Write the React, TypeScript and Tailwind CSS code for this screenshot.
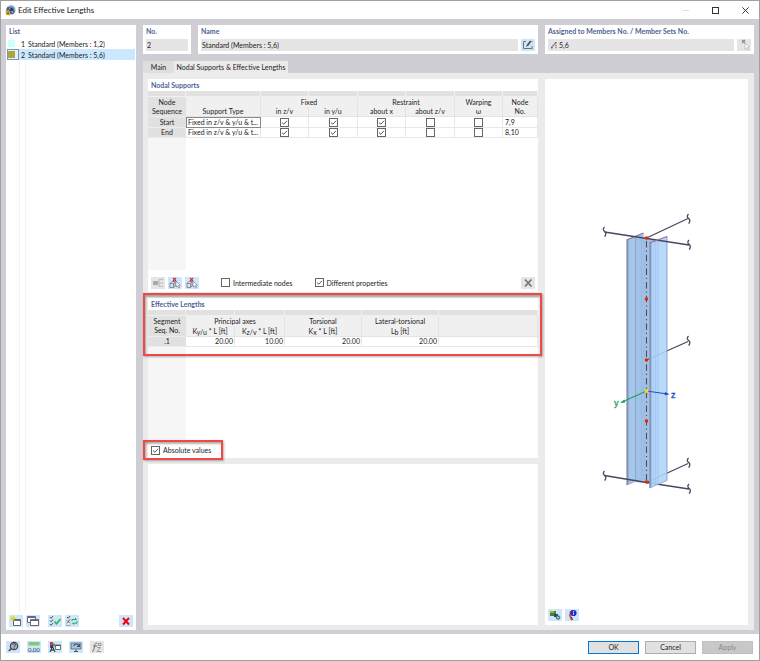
import React, { useState } from "react";

type CheckProps = { label: string; checked?: boolean; showLabel?: boolean };

function Check({ label, checked = false, showLabel = false }: CheckProps) {
  const [on, setOn] = useState(checked);
  return (
    <label className="inline-flex items-center gap-[3px] align-top">
      <span className="grid size-[9px] shrink-0">
        <input
          type="checkbox"
          aria-label={label}
          checked={on}
          onChange={() => setOn(!on)}
          className="col-start-1 row-start-1 size-[9px] appearance-none border border-[#666] bg-white"
        />
        {on && (
          <svg viewBox="0 0 9 9" className="pointer-events-none col-start-1 row-start-1 size-[9px]" aria-hidden="true">
            <path d="M2 4.6 L3.8 6.2 L7 2.8" fill="none" stroke="#444" strokeWidth="0.9" />
          </svg>
        )}
      </span>
      {showLabel && <span>{label}</span>}
    </label>
  );
}

type ToolProps = { label: string; off?: boolean; children: React.ReactNode };

function Tool({ label, off = false, children }: ToolProps) {
  return (
    <button
      type="button"
      aria-label={label}
      disabled={off}
      className={
        off
          ? "flex h-3 w-[14px] shrink-0 items-center justify-center bg-[#e5e5e5]"
          : "flex h-3 w-[14px] shrink-0 items-center justify-center bg-[#cde6f9]"
      }
    >
      <svg viewBox="0 0 14 12" className="h-3 w-[14px]" fill="none" aria-hidden="true">
        {children}
      </svg>
    </button>
  );
}

function Heading({ children }: { children: React.ReactNode }) {
  return <h2 className="h-3 px-[3px] leading-3 font-bold text-[#4d5f92]">{children}</h2>;
}

function PickIcon({ muted = false }: { muted?: boolean }) {
  const line = muted ? "#aaa" : "#667";
  return (
    <>
      {!muted && (
        <path d="M2 6.5 L4 4.5 H7 V9 L5.5 10.5 H2 Z M2 6.5 H5.5 V10.5 M5.5 6.5 L7 5" stroke="#667" strokeWidth="0.7" fill="#dce6ee" />
      )}
      <path d="M5 1 L8 4 M8 1 L5 4" stroke={muted ? "#888" : "#e0202c"} strokeWidth="1.1" />
      <path d="M8 4 V10 L9.4 8.8 L10.6 11 L11.6 10.4 L10.6 8.4 L12.2 8.2 Z" fill="#fff" stroke={line} strokeWidth="0.6" />
    </>
  );
}

function Breaker({ x, y }: { x: number; y: number }) {
  return (
    <path
      d={`M${x} ${y - 5} q-2.4 2.4 0 4.4 q2.6 1.6 0.2 5.2`}
      fill="none"
      stroke="#4b4660"
      strokeWidth="1.3"
    />
  );
}

function MemberView() {
  return (
    <svg viewBox="545 79 203 529" className="min-h-0 w-full flex-1" role="img" aria-label="Member preview">
      <polygon points="626.5,240 643.5,233 643.5,478 626.5,485" fill="#a6c6ea" />
      <polygon points="635.5,237.5 658,240.5 658,484 635.5,482" fill="#a1c1e6" />
      <path d="M635.5 237V481" stroke="#829fc6" strokeWidth="0.8" />
      <path d="M641.5 235V480 M644 233V480" stroke="#8facd2" strokeWidth="0.4" />
      <path d="M627.5 240V485" stroke="#8792b4" strokeWidth="2" />
      <path d="M626.5 240 L643.5 233" stroke="#966f8c" strokeWidth="1.2" />
      <path d="M646.5 360 L688 341.5" stroke="#4b4660" strokeWidth="1.3" />
      <path d="M646.5 482.5 L688 463.5" stroke="#4b4660" strokeWidth="1.3" />
      <path d="M604.5 475.5 L646.5 482.5 L689 489" stroke="#4b4660" strokeWidth="1.3" fill="none" />
      <polygon points="649.5,243 667,236.5 667,480.5 649.5,488" fill="#afd4fb" fillOpacity="0.88" />
      <path d="M655.5 241V485 M658.5 240V484" stroke="#9cc2ec" strokeWidth="0.5" />
      <path d="M667 236.5V480.5" stroke="#7592bd" strokeWidth="0.8" />
      <path d="M650.3 243V488" stroke="#8792b4" strokeWidth="2" />
      <path d="M626.5 485 L634 482 M649.5 488 L667 480.5" stroke="#8ba3ca" strokeWidth="0.8" />
      <path d="M604.5 232 L689 245" stroke="#4b4660" strokeWidth="1.3" />
      <path d="M646.5 238 L688 218.5" stroke="#4b4660" strokeWidth="1.3" />
      <path d="M649.5 243 L667 236.5" stroke="#966f8c" strokeWidth="1.2" />
      <path d="M646.5 241V482" stroke="#54495a" strokeWidth="1.1" strokeDasharray="6.5 3 1.2 3" />
      <Breaker x={604.5} y={232} />
      <Breaker x={688.5} y={219} />
      <Breaker x={689} y={245} />
      <Breaker x={688.5} y={341} />
      <Breaker x={604.5} y={476} />
      <Breaker x={688.5} y={463} />
      <Breaker x={689} y={489} />
      {[238, 299, 360, 421, 482].map((cy) => (
        <circle key={cy} cx="646.5" cy={cy} r="1.8" fill="#e02a00" />
      ))}
      <path d="M646.5 391 L622 402" stroke="#1fa055" strokeWidth="1.1" />
      <path d="M620 403 L624.2 399.6 L625.4 402.4 Z" fill="#1fa055" />
      <path d="M646.5 391 L666 393.7" stroke="#2456b8" strokeWidth="1.1" />
      <path d="M669.5 394.2 L665 391.9 L664.6 395.3 Z" fill="#1848c8" />
      <circle cx="646.5" cy="391" r="1.9" fill="#ffd800" />
      <g fontFamily="Liberation Sans, sans-serif" fontSize="9" strokeWidth="0.3">
        <text x="614" y="406" fill="#1fa055" stroke="#1fa055">y</text>
        <text x="671" y="398" fill="#1848c8" stroke="#1848c8">z</text>
      </g>
    </svg>
  );
}

const supportRows = [
  { seq: "Start", nodes: "7,9", marks: [true, true, true, false, false] },
  { seq: "End", nodes: "8,10", marks: [true, true, true, false, false] },
];
const markNames = ["Fixed in z/v", "Fixed in y/u", "Restraint about x", "Restraint about z/v", "Warping"];

const groupCell = "border-r border-[#e3e3e3] bg-[#f0f0f0] p-0 font-normal";
const headCell = "border-r border-b border-[#e3e3e3] bg-[#f0f0f0] p-0 font-normal";
const sideCell = "border-b border-[#ececec] bg-[#e1e1e1] p-0 text-center font-normal";
const bodyCell = "border-r border-b border-[#e8e8e8] p-0";

function Strip({ count }: { count: number }) {
  return (
    <tr className="h-[6px]">
      {Array.from({ length: count }, (_, i) => (
        <td key={i} className="border-r border-b border-[#f0f0f0] bg-[#e1e1e1] p-0" />
      ))}
    </tr>
  );
}

function NodalSupports() {
  return (
    <section className="flex flex-[213] flex-col bg-white">
      <Heading>Nodal Supports</Heading>
      <table className="w-full table-fixed border-separate border-spacing-0 leading-[9px]">
        <colgroup>
          <col className="w-[38px]" />
          <col />
          <col className="w-[48px]" />
          <col className="w-[49px]" />
          <col className="w-[48px]" />
          <col className="w-[49px]" />
          <col className="w-[48px]" />
          <col className="w-[35px]" />
        </colgroup>
        <thead>
          <Strip count={8} />
          <tr className="h-[10px]">
            <th rowSpan={2} className={sideCell}>Node<br />Sequence</th>
            <th rowSpan={2} className={`${headCell} align-bottom`}>Support Type</th>
            <th colSpan={2} className={groupCell}>Fixed</th>
            <th colSpan={2} className={groupCell}>Restraint</th>
            <th className={groupCell}>Warping</th>
            <th rowSpan={2} className={headCell}>Node<br />No.</th>
          </tr>
          <tr className="h-[10px]">
            <th className={headCell}>in z/v</th>
            <th className={headCell}>in y/u</th>
            <th className={headCell}>about x</th>
            <th className={headCell}>about z/v</th>
            <th className={headCell}>ω</th>
          </tr>
        </thead>
        <tbody>
          {supportRows.map((r, i) => (
            <tr key={r.seq} className="h-[10px]">
              <th className={sideCell}>{r.seq}</th>
              <td className={i === 0 ? "border border-[#888] p-0 pl-px whitespace-nowrap" : `${bodyCell} pl-[2px] whitespace-nowrap`}>
                Fixed in z/v &amp; y/u &amp; t...
              </td>
              {r.marks.map((m, k) => (
                <td key={k} className={`${bodyCell} text-center`}>
                  <span className="flex justify-center">
                    <Check label={`${r.seq}: ${markNames[k]}`} checked={m} />
                  </span>
                </td>
              ))}
              <td className={`${bodyCell} pl-[2px]`}>{r.nodes}</td>
            </tr>
          ))}
        </tbody>
      </table>
      <div className="w-[38px] flex-1 bg-[#f6f6f6]" />
      <div className="flex h-[22px] items-center px-[3px] pt-[3px]">
        <div className="flex gap-[3px]">
          <Tool label="Insert row" off>
            <path d="M2 4h5v4h-5z" fill="#aaa" />
            <path d="M8 2.5h4M8 6h4M8 9.5h4M8 2.5v7" stroke="#bbb" />
          </Tool>
          <Tool label="Pick start node"><PickIcon /></Tool>
          <Tool label="Pick end node"><PickIcon /></Tool>
        </div>
        <div className="ml-[22px] flex flex-1 gap-[22px]">
          <Check label="Intermediate nodes" showLabel />
          <Check label="Different properties" checked showLabel />
        </div>
        <Tool label="Clear supports" off>
          <path d="M4 2.5l6.5 7M10.5 2.5L4 9.5" stroke="#777" strokeWidth="1.8" />
        </Tool>
      </div>
    </section>
  );
}

function Sub({ a, s, b }: { a: string; s: string; b: string }) {
  return <>{a}<span className="relative top-px">{s}</span>{b}</>;
}

function EffectiveLengths() {
  return (
    <section className="relative flex flex-[160] flex-col bg-white">
      <div className="pointer-events-none absolute -top-[5px] -right-1 -left-[5px] h-[63px] border-2 border-[#f04844] shadow-[1px_1px_2px_rgba(0,0,0,0.3),inset_1px_2px_2px_rgba(0,0,0,0.3)]" />
      <Heading>Effective Lengths</Heading>
      <table className="w-full table-fixed border-separate border-spacing-0 leading-[9px]">
        <colgroup>
          <col className="w-[38px]" />
          <col className="w-[49px]" />
          <col className="w-[50px]" />
          <col className="w-[77px]" />
          <col className="w-[77px]" />
          <col />
        </colgroup>
        <thead>
          <Strip count={6} />
          <tr className="h-[10px]">
            <th rowSpan={2} className={sideCell}>Segment<br />Seq. No.</th>
            <th colSpan={2} className={groupCell}>Principal axes</th>
            <th className={groupCell}>Torsional</th>
            <th className={groupCell}>Lateral-torsional</th>
            <th rowSpan={2} className={headCell} />
          </tr>
          <tr className="h-[11px]">
            <th className={headCell}><Sub a="K" s="y/u" b=" * L [ft]" /></th>
            <th className={headCell}><Sub a="K" s="z/v" b=" * L [ft]" /></th>
            <th className={headCell}><Sub a="K" s="x" b=" * L [ft]" /></th>
            <th className={headCell}><Sub a="L" s="b" b=" [ft]" /></th>
          </tr>
        </thead>
        <tbody>
          <tr className="h-[10px] text-right">
            <th className={sideCell}>.1</th>
            <td className={`${bodyCell} pr-px`}>20.00</td>
            <td className={`${bodyCell} pr-px`}>10.00</td>
            <td className={`${bodyCell} pr-px`}>20.00</td>
            <td className={`${bodyCell} pr-px`}>20.00</td>
            <td className={bodyCell} />
          </tr>
        </tbody>
      </table>
      <div className="w-[38px] flex-1 bg-[#f6f6f6]" />
      <div className="relative flex h-4 items-center px-[3px]">
        <Check label="Absolute values" checked showLabel />
        <div className="pointer-events-none absolute -top-[2px] -left-[5px] h-5 w-20 border-2 border-[#f04844] shadow-[1px_1px_2px_rgba(0,0,0,0.3),inset_1px_2px_2px_rgba(0,0,0,0.3)]" />
      </div>
    </section>
  );
}

function MemberList() {
  const items = [
    { n: 1, text: "Standard (Members : 1,2)" },
    { n: 2, text: "Standard (Members : 5,6)" },
  ];
  return (
    <aside className="flex w-[130px] shrink-0 flex-col bg-white">
      <Heading>List</Heading>
      <ul className="flex flex-1 flex-col pt-px">
        {items.map((it) => (
          <li key={it.n} className={it.n === 2 ? "mr-px ml-px flex h-[11px] items-center bg-[#cce8ff]" : "mx-px flex h-[11px] items-center"}>
            <span className={it.n === 2 ? "flex h-[11px] w-3 items-center border border-[#8095ab] bg-[#e4f1fb]" : "flex h-[11px] w-3 items-center border border-transparent"}>
              <span className={it.n === 2 ? "size-[7px] bg-[#aaa83c]" : "size-[7px] bg-[#ccffff]"} />
            </span>
            <span className="w-[6px] text-right">{it.n}</span>
            <span className="pl-[3px] whitespace-nowrap">{it.text}</span>
          </li>
        ))}
        <li aria-hidden="true" className="ml-[13px] w-[7px] flex-1 border-x border-[#f2f2f2]" />
      </ul>
      <div className="flex h-[18px] items-center gap-[3px] px-[3px]">
        <Tool label="New">
          <path d="M4.5 4.5h7v6h-7z" fill="#fff" stroke="#667" />
          <path d="M4 5.5h8" stroke="#667" />
          <path d="M4 1v5M1.5 3.5h5M2.2 1.7l3.6 3.6M5.8 1.7L2.2 5.3" stroke="#e3d400" />
        </Tool>
        <Tool label="Copy">
          <path d="M1.5 1.5h8v6h-8z" fill="#fff" stroke="#667" />
          <path d="M4.5 4.5h8v6h-8z" fill="#fff" stroke="#667" />
          <path d="M1.5 2.5h8M4.5 5.5h8" stroke="#667" />
        </Tool>
        <span className="w-[2px]" />
        <Tool label="Select all">
          <path d="M2 2l1.2 1.3L5 1M2 5.5l1.2 1.3L5 4.5M2 9l1.2 1.3L5 8" stroke="#555" />
          <path d="M6.5 6.5l2 2.3L12.5 4" stroke="#24b353" strokeWidth="1.5" />
        </Tool>
        <Tool label="Invert selection">
          <path d="M2 2l1.2 1.3L5 1M2 5.5l1.2 1.3L5 4.500" stroke="#555" />
          <path d="M2 7.5h3v3H2z" fill="#fff" stroke="#777" strokeWidth="0.6" />
          <path d="M7 6V4.5h4.500l-1.500-1.500M12 6v2.200H7.500l1.500 1.500" stroke="#24a853" />
        </Tool>
        <span className="flex-1" />
        <Tool label="Delete">
          <path d="M4 3l6 6.5M10 3L4 9.5" stroke="#f00008" strokeWidth="1.9" />
        </Tool>
      </div>
    </aside>
  );
}

export default function App() {
  return (
    <div className="flex min-h-screen flex-col border border-[#a0a0a0] bg-[#cfced5] font-[Lato,'Noto_Sans',sans-serif] text-[7px] leading-[10px] text-[#222]">
      <header className="flex h-[18px] items-center bg-white pr-2 pl-1">
        <svg viewBox="0 0 11 11" className="size-[11px]" aria-hidden="true">
          <circle cx="5.8" cy="5" r="4.6" fill="#4a678f" />
          <path d="M3 1.5L8.500 2L10 6M4.500 3L8 8" stroke="#a4bad6" fill="none" />
          <circle cx="6.5" cy="4.5" r="1.5" fill="#273c60" />
          <path d="M0.5 6.5l3-1.5 2 3-1 2.5-3.5-.5z" fill="#d6ad28" />
          <path d="M2 7.5h2v1.5H2z" fill="#765d25" />
        </svg>
        <h1 className="flex-1 pl-[2px] text-[8px]">Edit Effective Lengths</h1>
        <div className="flex items-center gap-[19px]">
          <button type="button" aria-label="Minimize" disabled className="flex h-3 w-[11px] items-center justify-center">
            <span className="h-px w-[6px] bg-[#ddd]" />
          </button>
          <button type="button" aria-label="Maximize" className="flex h-3 w-[11px] items-center justify-center">
            <span className="size-[7px] border border-[#333]" />
          </button>
          <button type="button" aria-label="Close" className="flex h-3 w-[11px] items-center justify-center">
            <svg viewBox="0 0 7 7" className="size-[7px]" aria-hidden="true">
              <path d="M.4.4l6.2 6.2M6.6.4L.4 6.6" stroke="#222" strokeWidth="0.9" />
            </svg>
          </button>
        </div>
      </header>

      <div className="flex flex-1 gap-[7px] px-[5px] pt-[6px] pb-1">
        <MemberList />
        <main className="flex min-w-0 flex-1 flex-col">
          <div className="flex h-[29px] gap-[7px]">
            <section className="w-[48px] bg-white">
              <Heading><label htmlFor="no">No.</label></Heading>
              <div className="px-[3px] pt-[2px]">
                <input id="no" readOnly value="2" className="block h-3 w-full bg-[#e5e5e5] px-px" />
              </div>
            </section>
            <section className="min-w-0 flex-1 bg-white">
              <Heading><label htmlFor="name">Name</label></Heading>
              <div className="flex gap-[3px] px-[3px] pt-[2px]">
                <input id="name" readOnly value="Standard (Members : 5,6)" className="block h-3 min-w-0 flex-1 bg-[#e5e5e5] px-px" />
                <Tool label="Edit name">
                  <path d="M5 2.5H2.5v7H11V7" stroke="#555" strokeWidth="0.8" />
                  <path d="M5 8l1-2.500L9 1.500l1.500 1L7.500 6.500z" fill="#555" />
                  <path d="M10 2.500h2M9 9.500h3" stroke="#777" strokeWidth="0.7" />
                </Tool>
              </div>
            </section>
            <section className="w-[209px] bg-white">
              <Heading><label htmlFor="assigned">Assigned to Members No. / Member Sets No.</label></Heading>
              <div className="flex gap-[3px] px-[3px] pt-[2px]">
                <div className="flex h-3 min-w-0 flex-1 items-center bg-[#e5e5e5] pl-[2px]">
                  <svg viewBox="0 0 8 8" className="size-2 shrink-0" aria-hidden="true">
                    <path d="M1.5 6.500L5.500 2" stroke="#6b8dba" strokeWidth="1.2" />
                    <path d="M5 1h1.500v1.500H5zM1 6h1.500v1.500H1z" fill="#d42a2a" />
                    <path d="M6 4v3.500" stroke="#444" strokeWidth="0.9" strokeDasharray="1.2 .8" />
                  </svg>
                  <input id="assigned" readOnly value="5,6" className="h-3 min-w-0 flex-1 bg-transparent pl-px" />
                </div>
                <Tool label="Pick members" off><PickIcon muted /></Tool>
              </div>
            </section>
          </div>

          <div role="tablist" className="mt-[7px] flex h-3">
            <button type="button" role="tab" aria-selected="false" className="w-[31px] bg-[#dedede]">Main</button>
            <button type="button" role="tab" aria-selected="true" className="w-[114px] bg-[#ebebeb] whitespace-nowrap">Nodal Supports &amp; Effective Lengths</button>
          </div>

          <div role="tabpanel" className="flex flex-1 gap-[7px] bg-[#ebebeb] pt-[6px] pr-[6px] pb-[5px] pl-[5px]">
            <div className="flex min-w-0 flex-1 flex-col gap-[6px]">
              <NodalSupports />
              <EffectiveLengths />
              <section aria-label="Details" className="flex-[161] bg-white" />
            </div>
            <section aria-label="Preview" className="flex w-[203px] flex-col bg-white">
              <MemberView />
              <div className="flex h-[17px] gap-[3px] px-[3px] pt-px">
                <Tool label="Render view">
                  <path d="M2 2h6v5H2z" fill="#527941" />
                  <path d="M2 2h4v2H2z" fill="#a4ab37" />
                  <path d="M6 5h4v3H6z" fill="#314d40" />
                  <circle cx="10" cy="8.5" r="2.3" fill="#5778a5" />
                  <circle cx="10" cy="8.5" r="0.8" fill="#cde6f9" />
                </Tool>
                <Tool label="View information">
                  <path d="M5 2l2-1v3l-1 2 1 5-1 .5-2-5z" fill="#e0442d" />
                  <path d="M6.5 8l1 3" stroke="#282860" />
                  <circle cx="8.5" cy="4" r="3.1" fill="#1b2dd2" />
                  <path d="M8.5 2v.8M8.500 3.500v2.200" stroke="#fff" strokeWidth="0.9" />
                </Tool>
              </div>
            </section>
          </div>
        </main>
      </div>

      <footer className="flex h-[26px] items-center bg-white pr-[6px] pl-[5px]">
        <div className="flex flex-1 gap-[7px]">
          <Tool label="Help">
            <circle cx="8" cy="5" r="3.7" fill="#aab3bd" stroke="#445" strokeWidth="1.2" />
            <path d="M6.700 4q0-1.500 1.500-1.500T9.500 4q0 .8-1.300 1.500v1M8.200 7v.8" stroke="#334" strokeWidth="0.8" />
            <path d="M5.300 7.500L2.800 10" stroke="#445" strokeWidth="1.6" />
          </Tool>
          <Tool label="Units and decimal places">
            <path d="M1.500 1h11v3.500h-11z" fill="#80c878" />
            <text x="1" y="10.5" fontSize="6" fill="#203c60">0,00</text>
          </Tool>
          <Tool label="Display options">
            <path d="M2 1h3v3H2z" fill="#e33" /><path d="M2 4h3v3H2z" fill="#2a44cc" />
            <path d="M5 2.500h2v3H5z" fill="#49a84d" />
            <path d="M2 11l2.500-5.500L7 11M3 9h3" stroke="#222" />
            <path d="M7.500 4h5v4.500h-5z" fill="#fff" stroke="#555" strokeWidth="0.8" />
            <path d="M7.500 4.500h5" stroke="#555" />
          </Tool>
          <Tool label="Screen view">
            <path d="M2 2h10v6H2z" fill="#a9c3d6" stroke="#567" strokeWidth="0.8" />
            <path d="M5 10.500h4M7 8.500v2" stroke="#456" />
            <path d="M4.500 5Q7 1 10 5M10.500 3v2.500H8" stroke="#384f68" strokeWidth="1.1" />
          </Tool>
          <Tool label="Formula" off>
            <path d="M2 10.500q1.500 0 2-2.500l1-4.500q.5-1.800 2-1.500M3 5h4" stroke="#777" />
            <path d="M7 6.500h3.500L7 10.500h4M8 2.500h3v2H8z" stroke="#888" strokeWidth="0.8" />
          </Tool>
        </div>
        <div className="flex gap-[6px]">
          <button type="button" className="h-[13px] w-[51px] border border-[#0078d7] bg-[#e1e1e1] leading-[11px]">OK</button>
          <button type="button" className="h-[13px] w-[51px] border border-[#adadad] bg-[#e1e1e1] leading-[11px]">Cancel</button>
          <button type="button" disabled className="h-[13px] w-[51px] border border-[#bfbfbf] bg-[#c8c8c8] leading-[11px] text-[#888]">Apply</button>
        </div>
      </footer>
    </div>
  );
}
